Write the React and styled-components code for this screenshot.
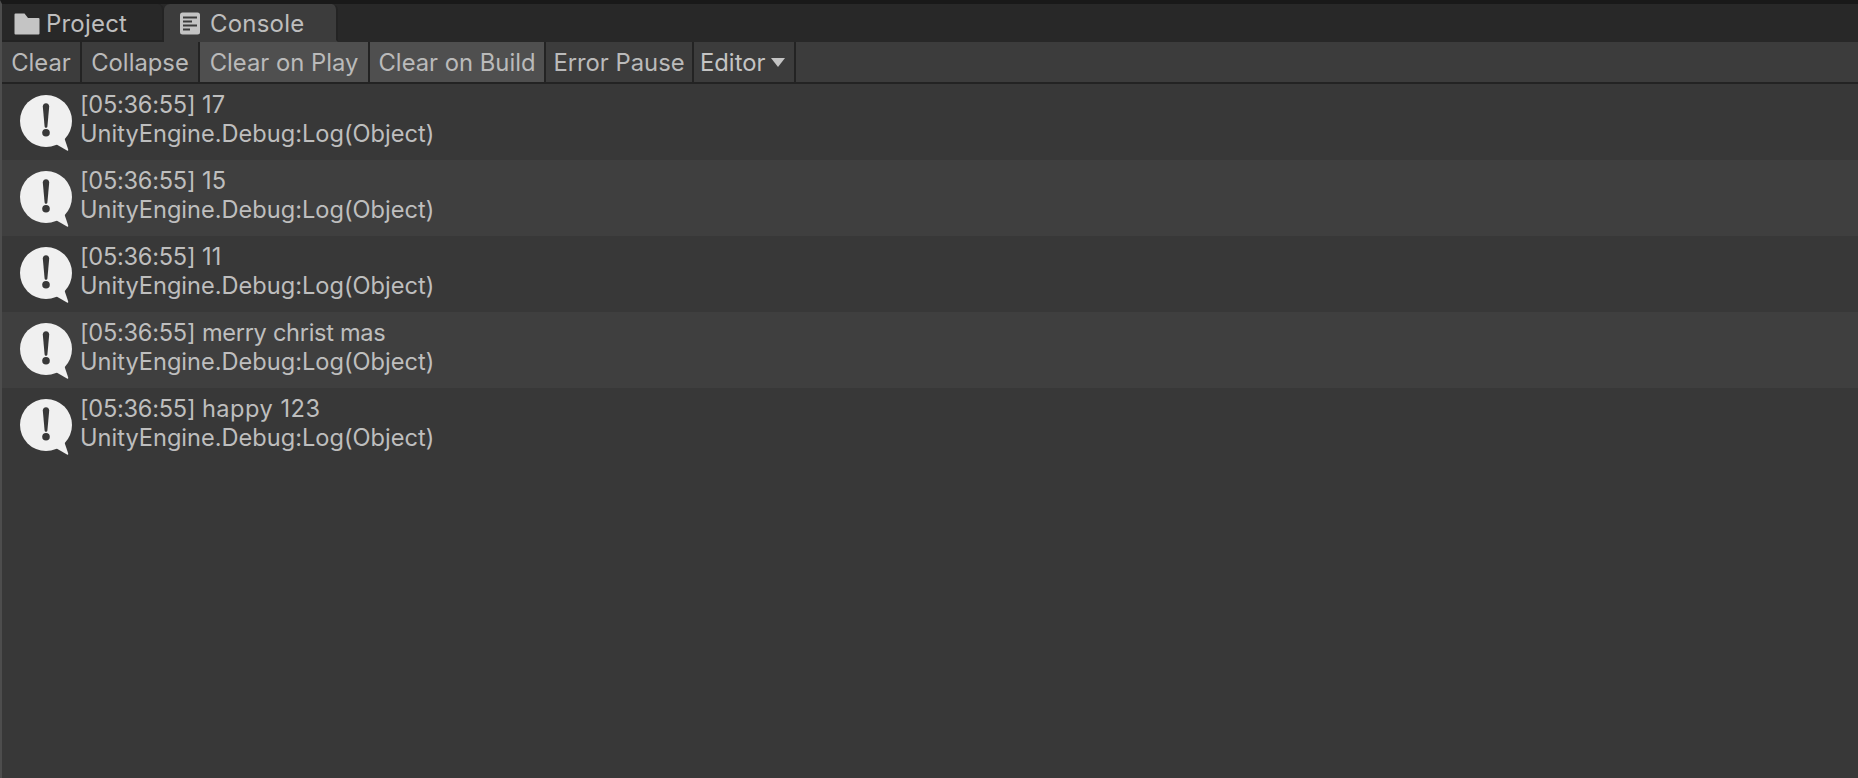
import React from 'react';
import styled, { createGlobalStyle } from 'styled-components';

const GlobalStyle = createGlobalStyle`
  html, body {
    margin: 0;
    padding: 0;
    height: 100%;
    overflow: hidden;
    background: #383838;
  }
  #root {
    height: 100%;
  }
`;

const Window = styled.div`
  display: flex;
  flex-direction: column;
  height: 778px;
  font-family: Inter, "Liberation Sans", sans-serif;
  font-size: 23.6px;
  color: #bebebe;
  background: #383838;
  border-left: 2px solid #4d4d4d;
  border-top: 4px solid #191919;
  box-sizing: border-box;
`;

const TabBar = styled.div`
  display: flex;
  align-items: stretch;
  height: 38px;
  flex-shrink: 0;
  background: #282828;
`;

const Tab = styled.div`
  display: flex;
  align-items: center;
  box-sizing: border-box;
  width: ${p => p.$width}px;
  padding-left: ${p => p.$pad}px;
  padding-top: 3px;
  gap: ${p => p.$gap}px;
  font-size: 24px;
  letter-spacing: 0.2px;
  background: ${p => (p.$active ? '#3c3c3c' : '#282828')};
  border-radius: 6px 6px 0 0;
  border-right: 2px solid #232323;
  border-bottom: 2px solid ${p => (p.$active ? '#3c3c3c' : '#232323')};
`;

const Toolbar = styled.div`
  display: flex;
  height: 42px;
  flex-shrink: 0;
  box-sizing: border-box;
  background: #3c3c3c;
  border-bottom: 2px solid #232323;
`;

const ToolButton = styled.div`
  display: flex;
  align-items: center;
  justify-content: ${p => (p.$dropdown ? 'flex-start' : 'center')};
  gap: 6px;
  box-sizing: border-box;
  width: ${p => p.$width}px;
  padding-left: ${p => (p.$dropdown ? 6 : 0)}px;
  padding-top: 1px;
  font-size: 23.8px;
  background: ${p => (p.$on ? '#4f4f4f' : '#3c3c3c')};
  border-right: 2px solid #232323;
  color: ${p => (p.$dropdown ? '#c4c4c4' : '#bababa')};
`;

const Caret = styled.span`
  width: 0;
  height: 0;
  border-left: 7.5px solid transparent;
  border-right: 7.5px solid transparent;
  border-top: 9px solid #c4c4c4;
`;

const List = styled.div`
  flex: 1;
  display: flex;
  flex-direction: column;
`;

const Row = styled.div`
  display: flex;
  align-items: flex-start;
  height: 76px;
  box-sizing: border-box;
  padding: 11px 0 0 18px;
  gap: 6px;
  background: ${p => (p.$odd ? '#3f3f3f' : '#383838')};
`;

const Message = styled.div`
  display: flex;
  flex-direction: column;
  line-height: 29px;
  margin-top: -5px;
  white-space: nowrap;
`;

const Stamp = styled.span`
  letter-spacing: -0.27px;
`;

const Detail = styled.span`
  letter-spacing: ${p => p.$spacing}px;
`;

const FolderIcon = () => (
  <svg width="26" height="22" viewBox="0 0 26 22">
    <path d="M0.5 1.5Q0.5 0.5 1.5 0.5H10.5L14 5H24.5Q25.5 5 25.5 6V20.5Q25.5 21.5 24.5 21.5H1.5Q0.5 21.5 0.5 20.5Z" fill="#c4c4c4" />
  </svg>
);

const ConsoleIcon = () => (
  <svg width="22" height="24" viewBox="0 0 22 24">
    <rect x="1" y="0.5" width="20" height="22" rx="2.5" fill="#c4c4c4" />
    <path d="M4 5.5H18M4 9.5H13M4 13.5H18M4 17.5H11" stroke="#3c3c3c" strokeWidth="2" />
  </svg>
);

const InfoIcon = () => (
  <svg width="54" height="58" viewBox="0 0 54 58" style={{ flexShrink: 0 }}>
    <circle cx="26" cy="26" r="26" fill="#f0f0f0" />
    <path d="M34 48L47 55.6Q48.4 56.4 48.2 54.6L44 42Z" fill="#f0f0f0" />
    <path d="M22.8 11.5C22.8 7 29.2 7 29.2 11.5L27.4 31.5C27.2 33.2 24.8 33.2 24.6 31.5Z" fill="#383838" />
    <circle cx="26" cy="37.8" r="3.8" fill="#383838" />
  </svg>
);

const logs = [
  { text: '17', spacing: 0.4 },
  { text: '15', spacing: 0.4 },
  { text: '11', spacing: 0.4 },
  { text: 'merry christ mas', spacing: -0.3 },
  { text: 'happy 123', spacing: 0.5 },
];

export default function App() {
  return (
    <>
      <GlobalStyle />
      <Window>
        <TabBar>
          <Tab $width={162} $pad={12} $gap={6}>
            <FolderIcon />
            <span>Project</span>
          </Tab>
          <Tab $active $width={174} $pad={15} $gap={9}>
            <ConsoleIcon />
            <span>Console</span>
          </Tab>
        </TabBar>
        <Toolbar>
          <ToolButton $width={80}>Clear</ToolButton>
          <ToolButton $width={118}>Collapse</ToolButton>
          <ToolButton $width={170} $on>Clear on Play</ToolButton>
          <ToolButton $width={176} $on>Clear on Build</ToolButton>
          <ToolButton $width={148}>Error Pause</ToolButton>
          <ToolButton $width={102} $dropdown>
            Editor
            <Caret />
          </ToolButton>
        </Toolbar>
        <List>
          {logs.map((log, i) => (
            <Row key={i} $odd={i % 2 === 1}>
              <InfoIcon />
              <Message>
                <span>
                  <Stamp>[05:36:55]</Stamp> <Detail $spacing={log.spacing}>{log.text}</Detail>
                </span>
                <span>UnityEngine.Debug:Log(Object)</span>
              </Message>
            </Row>
          ))}
        </List>
      </Window>
    </>
  );
}
